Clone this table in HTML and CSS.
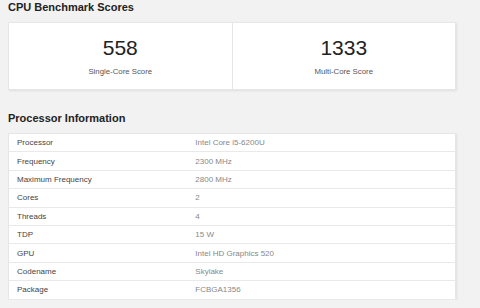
FILE: index.html
```html
<!DOCTYPE html>
<html>
<head>
    <title>CPU Details</title>
    <link rel="stylesheet" href="styles.css">
</head>
<body>
    <section class="scores">
        <h2>CPU Benchmark Scores</h2>
        <div class="score-card">
            <div class="score">
                <div class="score-value">558</div>
                <div class="score-label">Single-Core Score</div>
            </div>
            <div class="score">
                <div class="score-value">1333</div>
                <div class="score-label">Multi-Core Score</div>
            </div>
        </div>
    </section>
    <section class="info">
        <h2>Processor Information</h2>
        <table class="info-table">
            <tr><td>Processor</td><td>Intel Core i5-6200U</td></tr>
            <tr><td>Frequency</td><td>2300 MHz</td></tr>
            <tr><td>Maximum Frequency</td><td>2800 MHz</td></tr>
            <tr><td>Cores</td><td>2</td></tr>
            <tr><td>Threads</td><td>4</td></tr>
            <tr><td>TDP</td><td>15 W</td></tr>
            <tr><td>GPU</td><td>Intel HD Graphics 520</td></tr>
            <tr><td>Codename</td><td>Skylake</td></tr>
            <tr><td>Package</td><td>FCBGA1356</td></tr>
        </table>
    </section>
</body>
</html>
```

FILE: styles.css
```css
body {
    font-family: "Liberation Sans", Arial, sans-serif;
    margin: 0;
    padding: 0 24px 0 8px;
    background-color: #f2f2f2;
    color: #333;
}

h2 {
    font-size: 11px;
    font-weight: bold;
    line-height: 15px;
    margin: 0;
    color: #222;
}

.scores h2 {
    margin-bottom: 7px;
}

.score-card {
    display: flex;
    background-color: #fff;
    border: 1px solid #e6e6e6;
    box-shadow: 1px 1px 2px rgba(0, 0, 0, 0.08);
    height: 66px;
}

.score {
    flex: 1;
    text-align: center;
    padding-top: 13px;
}

.score + .score {
    border-left: 1px solid #e6e6e6;
}

.score-value {
    font-size: 21px;
    line-height: 24px;
    color: #222;
}

.score-label {
    font-size: 7.8px;
    color: #555;
    margin-top: 7px;
}

.info {
    margin-top: 21px;
}

.info h2 {
    margin-bottom: 7px;
}

.info-table {
    width: 100%;
    border-collapse: collapse;
    background-color: #fff;
    border: 1px solid #e6e6e6;
    box-shadow: 1px 1px 2px rgba(0, 0, 0, 0.08);
    font-size: 8px;
}

.info-table td {
    height: 17.4px;
    padding: 0 8px;
    border-bottom: 1px solid #e9e9e9;
    color: #444;
}

.info-table td:first-child {
    width: 40%;
}

.info-table td + td {
    color: #888;
}
```
